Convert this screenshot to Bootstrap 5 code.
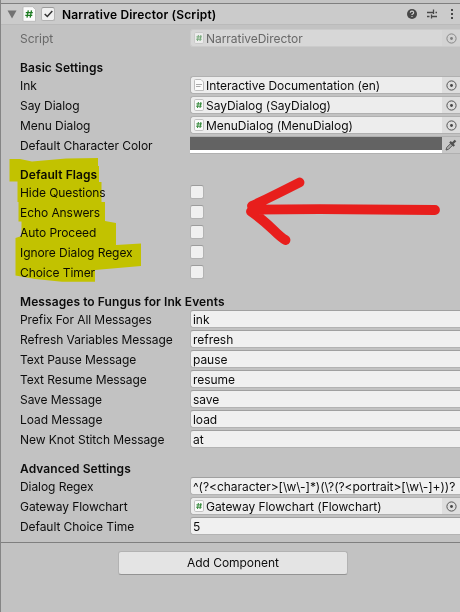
<!DOCTYPE html>
<html lang="en">
<head>
<meta charset="utf-8">
<meta name="viewport" content="width=device-width, initial-scale=1">
<title>Inspector</title>
<link href="https://cdn.jsdelivr.net/npm/bootstrap@5.3.0/dist/css/bootstrap.min.css" rel="stylesheet">
<style>
body{font-family:Inter,"Liberation Sans",sans-serif;font-size:12px;letter-spacing:-.04px;line-height:18px;color:#0c0c0c;background:#c2c2c2;overflow:hidden}
.inspector{width:460px;height:612px;border-left:1px solid #858585;overflow:hidden}
.edge{height:4px;border-bottom:1px solid #7f7f7f;background:#c4c4c4}
.title-row{height:21px;background:#cbcbcb;border-bottom:1px solid #bababa;padding:0 0 0 6px}
.title-text{font-weight:600;color:#000;letter-spacing:.17px;padding-top:1px;margin-left:7px}
.tick{width:14px;height:14px;background:#f0f0f0;border:1px solid #b3b3b3;border-top-color:#9c9c9c;border-radius:2.5px}
.prop .tick{margin-top:2px}
.title-row .tick{margin-left:4px}
.prop{height:18px;margin-bottom:2px;padding-left:19px}
.prop-label{width:170px;flex-shrink:0;padding-top:1px;white-space:nowrap;letter-spacing:-.07px}
.section{height:29px;padding:12px 0 0 19px;font-weight:600;letter-spacing:.08px;line-height:18px;margin-top:-2px}
.field{height:18px;min-width:0;background:#f0f0f0;border:1px solid #b3b3b3;border-top-color:#a0a0a0;border-right:0;border-radius:3px 0 0 3px;padding-left:2px;white-space:nowrap;line-height:18px}
.obj{background:#ededed;border-color:#b0b0b0;padding-left:3px}
.obj-name{padding-top:1px}
.pick{width:18px;height:16px;background:#dedede}
.doc{width:10px;height:12px;margin-right:2px}
.faded .prop-label,.faded .field{color:#686868}
.faded .field{background:#d7d7d7;border-color:#cbcbcb}
.faded .pick{background:#d3d3d3}
.faded svg{opacity:.6}
.swatch{height:18px;border:1px solid #b0b0b0;border-width:1px 0}
.tone{background:#636363;border-bottom:3px solid #fff}
.swatch .pick{background:#c8c8c8}
.add-btn{width:230px;height:24px;margin:8px 0 0 117px;padding:0;font-size:12px;letter-spacing:-.04px;line-height:22px;background:#e4e4e4;border:1px solid #b2b2b2;border-bottom-color:#939393;border-radius:3px;color:#0c0c0c}
.rule{height:1px;background:#7f7f7f;margin-top:7px}
.ink-layer{left:0;top:0;pointer-events:none;mix-blend-mode:multiply}
.pen-layer{left:0;top:0;pointer-events:none}
</style>
</head>
<body>
<svg width="0" height="0" class="position-absolute">
<symbol id="hash" viewBox="0 0 10 12"><rect x=".5" y=".5" width="9" height="11" rx="1.3" fill="#fbfbfb" stroke="#c2c2c2"/><path d="M4.400 3 3.500 9M6.900 3 6 9M2.400 4.900H8M2.100 7.200H7.700" stroke="#34893a" stroke-width="1" fill="none"/></symbol>
<symbol id="page" viewBox="0 0 10 12"><path d="M1.500.5H7L9.500 3V11.500H1.500Q.5 11.500.5 10.500V1.500Q.5.5 1.500.5Z" fill="#fbfbfb" stroke="#bdbdbd"/><path d="M2 5.500H8M2 7.500H6.500" stroke="#aaa"/></symbol>
<symbol id="target" viewBox="0 0 11 11"><circle cx="5.5" cy="5.5" r="4.6" fill="none" stroke="#555"/><circle cx="5.5" cy="5.5" r="1.4" fill="#444"/></symbol>
</svg>
<main class="inspector position-relative">
<div class="edge"></div>
<header class="title-row d-flex align-items-center">
<svg width="10" height="9"><path d="M.5 .5H9.5L5 8.5Z" fill="#727272"/></svg>
<svg class="ms-1" width="16" height="16" viewBox="0 0 16 16"><path d="M3 .7H11.500L14.500 3.500V15.300H3Q2 15.300 2 14.300V1.700Q2 .7 3 .7Z" fill="#fbfbfb" stroke="#b5b5b5" stroke-width=".8"/><path d="M7.300 4.300 6 11.700M10.500 4.300 9.200 11.700M4.800 6.600H11.800M4.300 9.400H11.300" stroke="#1d7c22" stroke-width="1.3"/></svg>
<span class="tick d-flex flex-shrink-0 align-items-center justify-content-center"><svg width="9" height="8"><path d="M.7 4 3.3 6.5 8.3 1" fill="none" stroke="#333" stroke-width="1.5"/></svg></span>
<span class="title-text">Narrative Director (Script)</span>
<svg class="ms-auto" width="53" height="14" viewBox="407 7 53 14"><circle cx="412" cy="14" r="5" fill="#484848"/><path d="M410.300 12.800Q410.400 11.200 412 11.200T413.700 12.700Q413.700 13.500 412 14.500V15M412 16V17" fill="none" stroke="#d0d0d0" stroke-width="1.200"/><path d="M427 12.500H433.500M435.500 12.500H437M433.500 9.500V14M427 16.500H429.500M432 16.500H437M431.500 14.500V18.500" fill="none" stroke="#484848" stroke-width="1.300"/><path d="M451 9h2v2h-2zM451 13h2v2h-2zM451 17h2v2h-2z" fill="#484848"/></svg>
</header>
<div class="pt-1">
<div class="prop d-flex faded"><div class="prop-label">Script</div><div class="field obj flex-fill d-flex align-items-center"><svg class="doc"><use href="#hash"/></svg><span class="obj-name flex-fill">NarrativeDirector</span><span class="pick d-flex align-items-center justify-content-center"><svg width="11" height="11"><use href="#target"/></svg></span></div></div>

<div class="section">Basic Settings</div>
<div class="prop d-flex"><div class="prop-label">Ink</div><div class="field obj flex-fill d-flex align-items-center"><svg class="doc"><use href="#page"/></svg><span class="obj-name flex-fill">Interactive Documentation (en)</span><span class="pick d-flex align-items-center justify-content-center"><svg width="11" height="11"><use href="#target"/></svg></span></div></div>
<div class="prop d-flex"><div class="prop-label">Say Dialog</div><div class="field obj flex-fill d-flex align-items-center"><svg class="doc"><use href="#hash"/></svg><span class="obj-name flex-fill">SayDialog (SayDialog)</span><span class="pick d-flex align-items-center justify-content-center"><svg width="11" height="11"><use href="#target"/></svg></span></div></div>
<div class="prop d-flex"><div class="prop-label">Menu Dialog</div><div class="field obj flex-fill d-flex align-items-center"><svg class="doc"><use href="#hash"/></svg><span class="obj-name flex-fill">MenuDialog (MenuDialog)</span><span class="pick d-flex align-items-center justify-content-center"><svg width="11" height="11"><use href="#target"/></svg></span></div></div>
<div class="prop d-flex"><div class="prop-label">Default Character Color</div><div class="swatch flex-fill d-flex"><span class="tone flex-fill"></span><span class="pick d-flex align-items-center justify-content-center"><svg width="12" height="12"><path d="M1 11 1.700 8.500 6 4.200 7.800 6 3.500 10.300Z" fill="#aaa" stroke="#555"/><path d="M5 2.800 9.200 7M6.500 5.500 10.500 1.500" stroke="#505050" stroke-width="2.300"/></svg></span></div></div>

<div class="section">Default Flags</div>
<div class="prop d-flex"><div class="prop-label">Hide Questions</div><span class="tick"></span></div>
<div class="prop d-flex"><div class="prop-label">Echo Answers</div><span class="tick"></span></div>
<div class="prop d-flex"><div class="prop-label">Auto Proceed</div><span class="tick"></span></div>
<div class="prop d-flex"><div class="prop-label">Ignore Dialog Regex</div><span class="tick"></span></div>
<div class="prop d-flex"><div class="prop-label">Choice Timer</div><span class="tick"></span></div>

<div class="section">Messages to Fungus for Ink Events</div>
<div class="prop d-flex"><div class="prop-label">Prefix For All Messages</div><div class="field flex-fill">ink</div></div>
<div class="prop d-flex"><div class="prop-label">Refresh Variables Message</div><div class="field flex-fill">refresh</div></div>
<div class="prop d-flex"><div class="prop-label">Text Pause Message</div><div class="field flex-fill">pause</div></div>
<div class="prop d-flex"><div class="prop-label">Text Resume Message</div><div class="field flex-fill">resume</div></div>
<div class="prop d-flex"><div class="prop-label">Save Message</div><div class="field flex-fill">save</div></div>
<div class="prop d-flex"><div class="prop-label">Load Message</div><div class="field flex-fill">load</div></div>
<div class="prop d-flex"><div class="prop-label">New Knot Stitch Message</div><div class="field flex-fill">at</div></div>

<div class="section">Advanced Settings</div>
<div class="prop d-flex"><div class="prop-label">Dialog Regex</div><div class="field flex-fill">^(?&lt;character&gt;[\w\-]*)(\?(?&lt;portrait&gt;[\w\-]+))?</div></div>
<div class="prop d-flex"><div class="prop-label">Gateway Flowchart</div><div class="field obj flex-fill d-flex align-items-center"><svg class="doc"><use href="#hash"/></svg><span class="obj-name flex-fill">Gateway Flowchart (Flowchart)</span><span class="pick d-flex align-items-center justify-content-center"><svg width="11" height="11"><use href="#target"/></svg></span></div></div>
<div class="prop d-flex"><div class="prop-label">Default Choice Time</div><div class="field flex-fill">5</div></div>
</div>
<div class="rule"></div>
<button class="btn add-btn d-block" type="button">Add Component</button>
<!-- highlighter strokes -->
<svg class="ink-layer position-absolute" width="459" height="612" viewBox="1 0 459 612"><path d="M9.500 159H20L32 161.500 66 158.500 98 158V166H99V182H101.500V202H105V221L116 223V245L141 243.500V266L95 270V281.700H62L35 279 15.500 275.500V238L21.500 236V221.500H18.500V202H17.500V181.500H9.500Z" fill="#ff0"/></svg>
<!-- hand-drawn arrow -->
<svg class="pen-layer position-absolute" width="459" height="612" viewBox="1 0 459 612"><path d="M299.500 182.500Q273 196 252 206M251 211.500Q262 219 274 230.500 281 237.500 285.500 240M252 209.700 320 209.200 435 210" fill="none" stroke="#e81e1c" stroke-width="9.800" stroke-linecap="round"/></svg>
</main>
<script src="https://cdn.jsdelivr.net/npm/bootstrap@5.3.0/dist/js/bootstrap.bundle.min.js"></script>
</body>
</html>
